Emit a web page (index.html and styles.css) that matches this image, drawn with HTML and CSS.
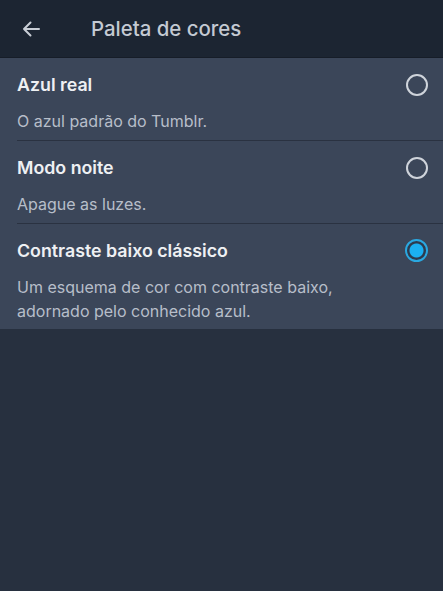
FILE: index.html
```html
<html>
<head>
    <title>Paleta de cores</title>
    <link rel="stylesheet" href="styles.css">
</head>
<body>
<div class="topBar">
    <span class="backBtn">
        <svg width="18" height="16" viewBox="0 0 18 16">
            <path d="M17 8H2M8.5 1.5L2 8l6.5 6.5" fill="none" stroke="#c9ced6" stroke-width="2" stroke-linecap="round" stroke-linejoin="round"/>
        </svg>
    </span>
    <span class="pageTitle">Paleta de cores</span>
</div>

<div class="paletteList">
    <div class="option">
        <div class="optionHead">
            <span class="optionName">Azul real</span>
            <span class="radio"></span>
        </div>
        <div class="optionDesc">O azul padrão do Tumblr.</div>
    </div>
    <div class="option">
        <div class="optionHead">
            <span class="optionName">Modo noite</span>
            <span class="radio"></span>
        </div>
        <div class="optionDesc">Apague as luzes.</div>
    </div>
    <div class="option last">
        <div class="optionHead">
            <span class="optionName">Contraste baixo clássico</span>
            <span class="radio checked"></span>
        </div>
        <div class="optionDesc">Um esquema de cor com contraste baixo,<br>adornado pelo conhecido azul.</div>
    </div>
</div>
</body>
</html>
```

FILE: styles.css
```css
body{
    margin: 0;
    background-color: #27303f;
    font-family: Inter, "Noto Sans", sans-serif;
    width: 443px;
    height: 591px;
    overflow: hidden;
}

.topBar{
    height: 57px;
    background-color: #1c2532;
    display: flex;
    align-items: center;
    border-bottom: 1px solid #161d28;
}
.backBtn{
    width: 91px;
    padding-left: 22px;
    box-sizing: border-box;
    display: flex;
    align-items: center;
}
.pageTitle{
    color: #c4cad3;
    font-size: 20.4px;
    font-weight: 500;
}

.paletteList{
    background-color: #3b4659;
}
.option{
    margin-left: 17px;
    padding-right: 15px;
    height: 83px;
    border-bottom: 1px solid #2a3241;
    box-sizing: border-box;
}
.option.last{
    height: 105px;
    border-bottom: none;
}
.optionHead{
    display: flex;
    justify-content: space-between;
    align-items: center;
    height: 52px;
}
.optionName{
    color: #eef0f3;
    font-size: 17.8px;
    font-weight: 600;
}
.optionDesc{
    color: #b7bec9;
    font-size: 16px;
    line-height: 24px;
    margin-top: -1px;
}

.radio{
    width: 18px;
    height: 18px;
    border: 2px solid #cfd4db;
    border-radius: 50%;
    margin-top: 1px;
}
.radio.checked{
    width: 19px;
    height: 19px;
    border-color: #2aa8e0;
    background: radial-gradient(circle, #1bb0f1 0, #1bb0f1 6.5px, #2d3a4d 7.5px);
}
```
